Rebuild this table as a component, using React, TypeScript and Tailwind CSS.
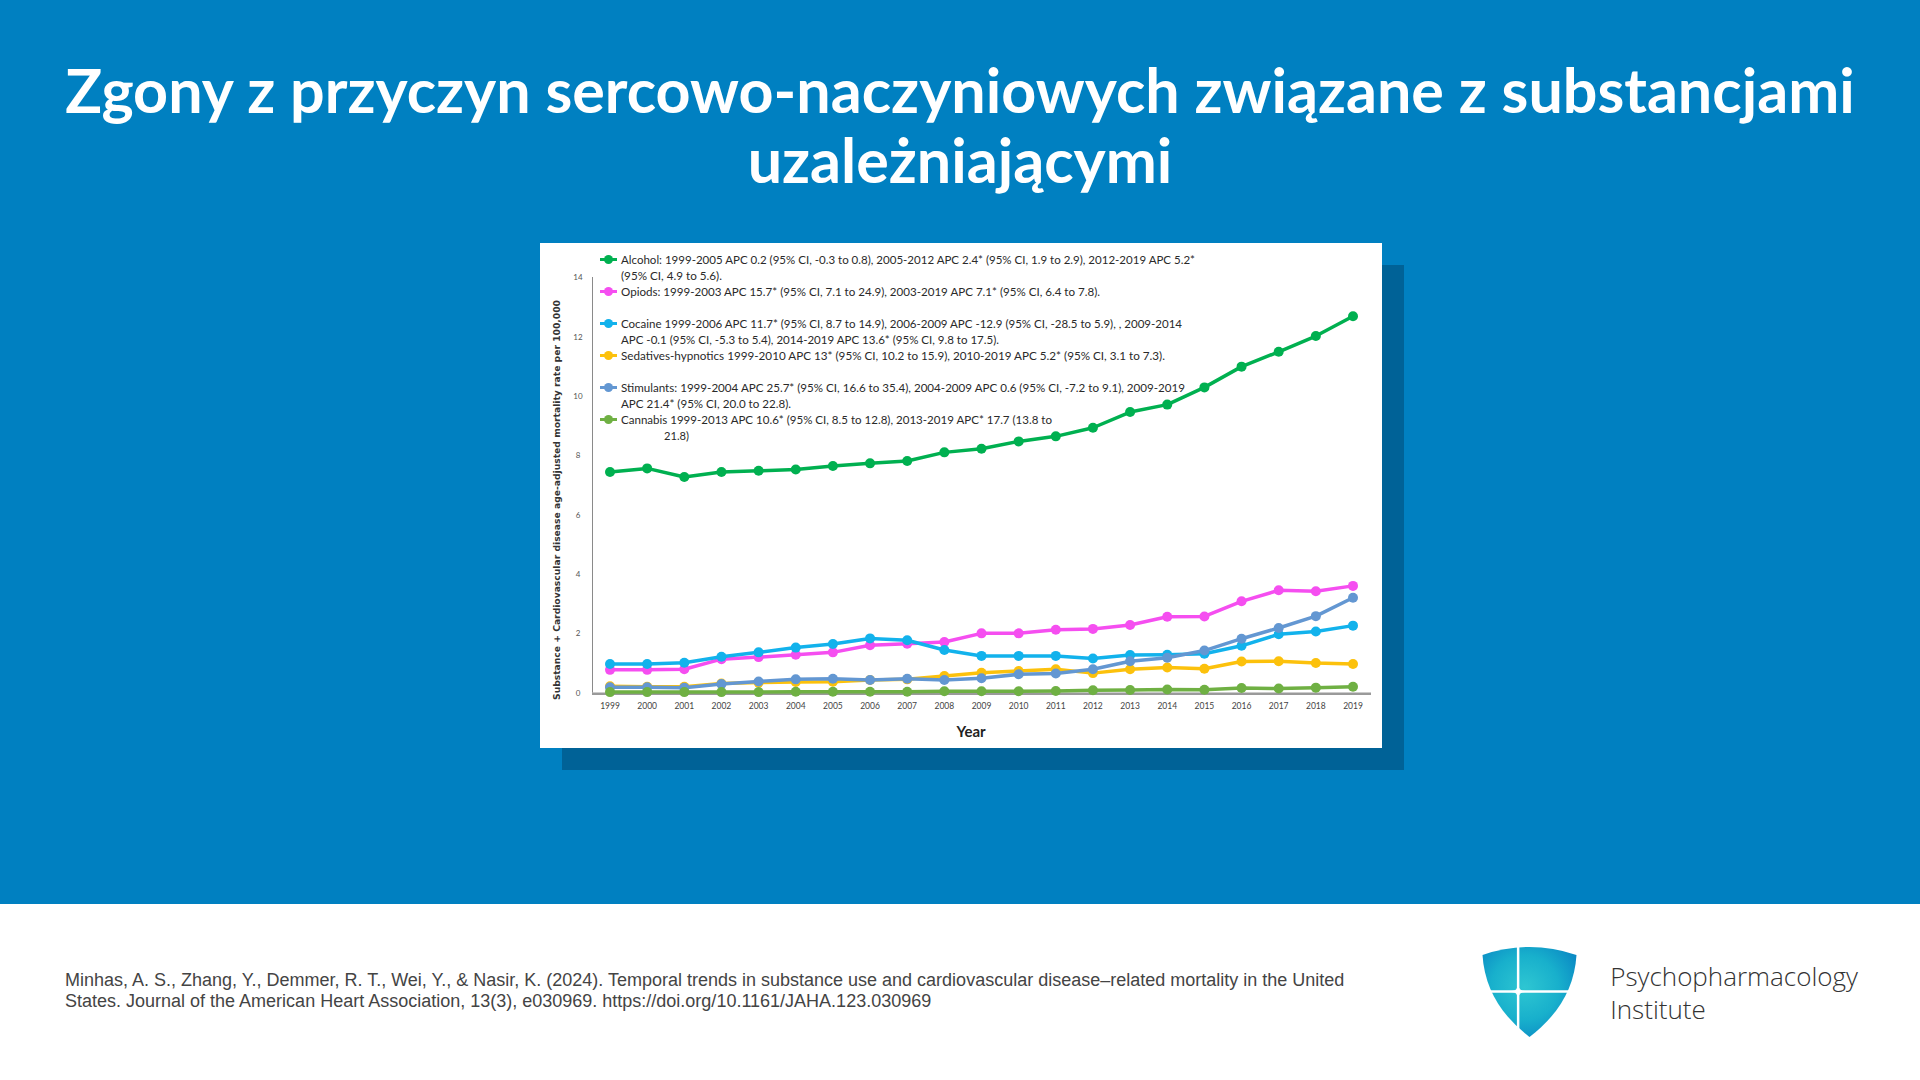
import React from "react";

// lata na osi X
const years = Array.from({ length: 21 }, (_, i) => 1999 + i);

// serie danych (odczytane z wykresu)
const series = [
  {
    name: "alcohol",
    color: "#00b050",
    data: [7.44, 7.56, 7.27, 7.44, 7.48, 7.52, 7.64, 7.73, 7.81, 8.1, 8.22, 8.47, 8.64, 8.93, 9.46, 9.71, 10.29, 10.99, 11.49, 12.02, 12.69],
  },
  {
    name: "opioids",
    color: "#f54ef0",
    data: [0.77, 0.77, 0.79, 1.13, 1.2, 1.28, 1.36, 1.6, 1.65, 1.71, 2.0, 2.0, 2.12, 2.15, 2.28, 2.56, 2.57, 3.08, 3.45, 3.42, 3.6],
  },
  {
    name: "cocaine",
    color: "#12b2ec",
    data: [0.97, 0.97, 1.01, 1.21, 1.36, 1.52, 1.64, 1.83, 1.77, 1.44, 1.24, 1.24, 1.24, 1.15, 1.27, 1.28, 1.31, 1.58, 1.97, 2.06, 2.26],
  },
  {
    name: "sedatives",
    color: "#fcc10c",
    data: [0.22, 0.2, 0.2, 0.31, 0.34, 0.36, 0.37, 0.43, 0.45, 0.56, 0.67, 0.73, 0.79, 0.66, 0.79, 0.85, 0.81, 1.05, 1.06, 1.0, 0.97],
  },
  {
    name: "stimulants",
    color: "#6397d2",
    data: [0.18, 0.18, 0.17, 0.29, 0.38, 0.45, 0.47, 0.43, 0.47, 0.43, 0.49, 0.62, 0.65, 0.79, 1.06, 1.18, 1.42, 1.82, 2.18, 2.58, 3.2],
  },
  {
    name: "cannabis",
    color: "#6fb043",
    data: [0.02, 0.02, 0.02, 0.02, 0.02, 0.03, 0.03, 0.03, 0.03, 0.05, 0.05, 0.05, 0.06, 0.08, 0.09, 0.11, 0.1, 0.16, 0.14, 0.17, 0.2],
  },
];

// legenda: [kolor | null, x, y, szerokość, tekst]
const legend: [string | null, number, number, number, string][] = [
  ["#00b050", 81, 20.5, 574, "Alcohol: 1999-2005 APC 0.2 (95% CI, -0.3 to 0.8), 2005-2012 APC 2.4* (95% CI, 1.9 to 2.9), 2012-2019 APC 5.2*"],
  [null, 81, 36.5, 101, "(95% CI, 4.9 to 5.6)."],
  ["#f54ef0", 81, 52.5, 479, "Opiods: 1999-2003 APC 15.7* (95% CI, 7.1 to 24.9), 2003-2019 APC 7.1* (95% CI, 6.4 to 7.8)."],
  ["#12b2ec", 81, 84.5, 561, "Cocaine 1999-2006 APC 11.7* (95% CI, 8.7 to 14.9), 2006-2009 APC -12.9 (95% CI, -28.5 to 5.9), , 2009-2014"],
  [null, 81, 100.5, 378, "APC -0.1 (95% CI, -5.3 to 5.4), 2014-2019 APC 13.6* (95% CI, 9.8 to 17.5)."],
  ["#fcc10c", 81, 116.5, 544, "Sedatives-hypnotics  1999-2010 APC 13* (95% CI, 10.2 to 15.9), 2010-2019 APC 5.2* (95% CI, 3.1 to 7.3)."],
  ["#6397d2", 81, 148.5, 564, "Stimulants:  1999-2004 APC 25.7* (95% CI, 16.6 to 35.4), 2004-2009 APC 0.6 (95% CI, -7.2 to 9.1), 2009-2019"],
  [null, 81, 164.5, 170, "APC 21.4* (95% CI, 20.0 to 22.8)."],
  ["#6fb043", 81, 180.5, 431, "Cannabis 1999-2013 APC 10.6* (95% CI, 8.5 to 12.8), 2013-2019 APC* 17.7 (13.8 to"],
  [null, 124, 196.5, 25, "21.8)"],
];

const x0 = 70;
const xStep = 37.15;
const yZero = 449.7;
const yUnit = 29.67;
const px = (i: number) => x0 + i * xStep;
const py = (v: number) => yZero - v * yUnit;

function Chart() {
  return (
    <svg width="842" height="505" viewBox="0 0 842 505" className="block">
      {/* osie */}
      <line x1="52.5" y1="34" x2="52.5" y2={yZero} stroke="#8a8a8a" strokeWidth="1" />
      <line x1="52" y1={yZero + 1} x2="831" y2={yZero + 1} stroke="#9a9a9a" strokeWidth="2.5" />

      {[0, 2, 4, 6, 8, 10, 12, 14].map((t) => (
        <text key={t} x="38" y={py(t) + 3} textAnchor="middle" fontSize="8" fill="#555" fontFamily="Lato, sans-serif">
          {t}
        </text>
      ))}

      {years.map((y, i) => (
        <text key={y} x={px(i)} y="466" textAnchor="middle" fontSize="8.5" fill="#444" fontFamily="Lato, sans-serif">
          {y}
        </text>
      ))}

      <text x="431" y="494" textAnchor="middle" fontSize="15" fontWeight="700" fill="#222" fontFamily="Lato, sans-serif">
        Year
      </text>

      <text
        x="0"
        y="0"
        transform="translate(20 257) rotate(-90)"
        textAnchor="middle"
        fontSize="9"
        fontWeight="700"
        fill="#333"
        fontFamily="'DejaVu Sans', sans-serif"
        textLength="400"
        lengthAdjust="spacingAndGlyphs"
      >
        Substance + Cardiovascular disease age-adjusted mortality rate per 100,000
      </text>

      {/* legenda */}
      {legend.map(([c, x, y, w, t], i) => (
        <g key={i}>
          {c && (
            <>
              <line x1="60" y1={y - 4} x2="77" y2={y - 4} stroke={c} strokeWidth="3" />
              <circle cx="68.5" cy={y - 4} r="4.5" fill={c} />
            </>
          )}
          <text
            x={x}
            y={y}
            fontSize="11"
            fill="#2a2a2a"
            fontFamily="Lato, sans-serif"
            textLength={w}
            lengthAdjust="spacingAndGlyphs"
          >
            {t}
          </text>
        </g>
      ))}

      {/* serie */}
      {series.map((s) => (
        <g key={s.name}>
          <polyline
            points={s.data.map((v, i) => `${px(i)},${py(v)}`).join(" ")}
            fill="none"
            stroke={s.color}
            strokeWidth="3.5"
            strokeLinejoin="round"
          />
          {s.data.map((v, i) => (
            <circle key={i} cx={px(i)} cy={py(v)} r="5" fill={s.color} />
          ))}
        </g>
      ))}
    </svg>
  );
}

function Shield() {
  return (
    <svg width="96" height="92" viewBox="0 -1 96 93" className="block">
      <defs>
        <radialGradient id="sg" cx="45%" cy="45%" r="65%">
          <stop offset="0%" stopColor="#2ec6d2" />
          <stop offset="55%" stopColor="#18b0cc" />
          <stop offset="100%" stopColor="#0a88c4" />
        </radialGradient>
      </defs>
      <path d="M0,8 Q47.5,-8 95,8 Q92,57 47.5,91 Q3,57 0,8 Z" fill="url(#sg)" />
      <line x1="36" y1="-2" x2="36" y2="93" stroke="#fff" strokeWidth="2.5" />
      <line x1="-2" y1="45" x2="98" y2="45" stroke="#fff" strokeWidth="2.5" />
      <path d="M36,38 Q36,45 43,45 Q36,45 36,52 Q36,45 29,45 Q36,45 36,38 Z" fill="#fff" stroke="#fff" strokeWidth="1" />
    </svg>
  );
}

export default function App() {
  return (
    <div className="w-[1920px] h-[1080px] flex flex-col overflow-hidden">
      {/* Część niebieska */}
      <section className="h-[904px] bg-[#0080c1] flex flex-col items-center pt-[55px]">
        <h1 className="text-white text-[61px] leading-[70px] font-bold text-center whitespace-nowrap font-['Lato',sans-serif]">
          Zgony z przyczyn sercowo-naczyniowych związane z substancjami
          <br />
          uzależniającymi
        </h1>

        <div className="mt-[48px] ml-[2px] w-[842px] h-[505px] bg-white shadow-[22px_22px_0_0_#006297]">
          <Chart />
        </div>
      </section>

      {/* Stopka */}
      <footer className="flex-1 bg-white flex items-center justify-between pl-[65px] pr-[62px]">
        <p className="text-[18px] leading-[21px] text-[#444] font-['Liberation_Sans',Arial,sans-serif] mt-[-2px]">
          Minhas, A. S., Zhang, Y., Demmer, R. T., Wei, Y., &amp; Nasir, K. (2024). Temporal trends in substance use and cardiovascular disease–related mortality in the United
          <br />
          States. Journal of the American Heart Association, 13(3), e030969. https://doi.org/10.1161/JAHA.123.030969
        </p>

        <div className="flex items-center gap-[32px]">
          <Shield />
          <div className="text-[#333] text-[26px] leading-[33px] font-light font-['Open_Sans',sans-serif] pt-[2px]">
            Psychopharmacology
            <br />
            Institute
          </div>
        </div>
      </footer>
    </div>
  );
}
